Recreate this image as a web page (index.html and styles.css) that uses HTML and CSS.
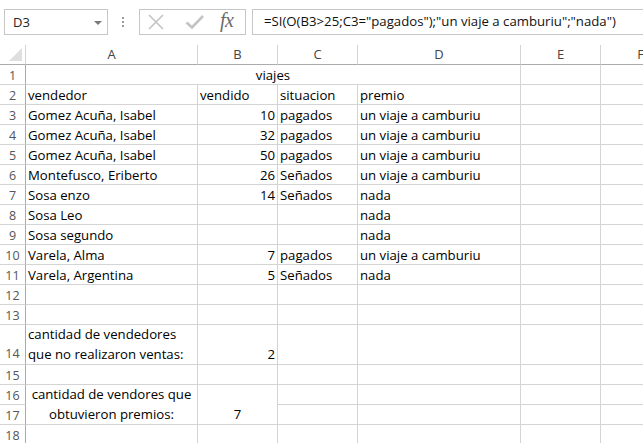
FILE: index.html
```html
<!DOCTYPE html>
<html>
<head>
<meta charset="utf-8">
<link rel="stylesheet" href="styles.css">
</head>
<body>
<div class="fbar">
  <div class="namebox"><span class="nb-text">D3</span><span class="nb-arrow"></span></div>
  <div class="dots"><i></i><i></i><i></i></div>
  <div class="btns">
    <svg class="ico-x" width="16" height="16" viewBox="0 0 16 16"><path d="M1 1L15 15M15 1L1 15" stroke="#c3c3c3" stroke-width="1.6" fill="none"/></svg>
    <svg class="ico-ok" width="20" height="16" viewBox="0 0 20 16"><path d="M1.5 8.5L7 13.5L18 2" stroke="#c3c3c3" stroke-width="2.6" fill="none"/></svg>
    <span class="fx">fx</span>
  </div>
  <div class="formula">=SI(O(B3&gt;25;C3="pagados");"un viaje a camburiu";"nada")</div>
</div>
<div class="sheet">
  <div class="hd corner"><span class="tri"></span></div>
  <div class="hd col">A</div><div class="hd col">B</div><div class="hd col">C</div><div class="hd col">D</div><div class="hd col">E</div><div class="hd col">F</div>

  <div class="rh">1</div><div class="c center span4">viajes</div><div class="c"></div><div class="c"></div>
  <div class="rh">2</div><div class="c">vendedor</div><div class="c">vendido</div><div class="c">situacion</div><div class="c">premio</div><div class="c"></div><div class="c"></div>
  <div class="rh">3</div><div class="c">Gomez Acuña, Isabel</div><div class="c num">10</div><div class="c">pagados</div><div class="c">un viaje a camburiu</div><div class="c"></div><div class="c"></div>
  <div class="rh">4</div><div class="c">Gomez Acuña, Isabel</div><div class="c num">32</div><div class="c">pagados</div><div class="c">un viaje a camburiu</div><div class="c"></div><div class="c"></div>
  <div class="rh">5</div><div class="c">Gomez Acuña, Isabel</div><div class="c num">50</div><div class="c">pagados</div><div class="c">un viaje a camburiu</div><div class="c"></div><div class="c"></div>
  <div class="rh">6</div><div class="c">Montefusco, Eriberto</div><div class="c num">26</div><div class="c">Señados</div><div class="c">un viaje a camburiu</div><div class="c"></div><div class="c"></div>
  <div class="rh">7</div><div class="c">Sosa enzo</div><div class="c num">14</div><div class="c">Señados</div><div class="c">nada</div><div class="c"></div><div class="c"></div>
  <div class="rh">8</div><div class="c">Sosa Leo</div><div class="c num"></div><div class="c"></div><div class="c">nada</div><div class="c"></div><div class="c"></div>
  <div class="rh">9</div><div class="c">Sosa segundo</div><div class="c num"></div><div class="c"></div><div class="c">nada</div><div class="c"></div><div class="c"></div>
  <div class="rh">10</div><div class="c">Varela, Alma</div><div class="c num">7</div><div class="c">pagados</div><div class="c">un viaje a camburiu</div><div class="c"></div><div class="c"></div>
  <div class="rh">11</div><div class="c">Varela, Argentina</div><div class="c num">5</div><div class="c">Señados</div><div class="c">nada</div><div class="c"></div><div class="c"></div>
  <div class="rh">12</div><div class="c"></div><div class="c"></div><div class="c"></div><div class="c"></div><div class="c"></div><div class="c"></div>
  <div class="rh">13</div><div class="c"></div><div class="c"></div><div class="c"></div><div class="c"></div><div class="c"></div><div class="c"></div>
  <div class="rh tall">14</div><div class="c wrap"><span>cantidad de vendedores<br>que no realizaron ventas:</span></div><div class="c num tallc">2</div><div class="c"></div><div class="c"></div><div class="c"></div><div class="c"></div>
  <div class="rh">15</div><div class="c"></div><div class="c"></div><div class="c"></div><div class="c"></div><div class="c"></div><div class="c"></div>
  <div class="rh">16</div><div class="c wrap center span2r"><span>cantidad de vendores que<br>obtuvieron premios:</span></div><div class="c center span2r bottom">7</div><div class="c"></div><div class="c"></div><div class="c"></div><div class="c"></div>
  <div class="rh">17</div><div class="c"></div><div class="c"></div><div class="c"></div><div class="c"></div>
  <div class="rh">18</div><div class="c"></div><div class="c"></div><div class="c"></div><div class="c"></div><div class="c"></div><div class="c"></div>
</div>
</body>
</html>
```
FILE: styles.css
```css
* { box-sizing: border-box; }
html, body { margin: 0; padding: 0; background: #fff; overflow: hidden; }
body {
  width: 643px; height: 443px;
  font-family: "Open Sans", "Noto Sans", sans-serif;
  font-size: 13.2px;
  color: #000;
}
.fbar {
  height: 45px;
  padding-top: 9px;
  display: flex;
  align-items: flex-start;
}
.namebox {
  margin-left: 4px;
  width: 104px; height: 26px;
  border: 1px solid #c6c6c6;
  display: flex; align-items: center;
  padding-left: 8px;
  position: relative;
}
.nb-text { font-size: 13px; color: #222; }
.nb-arrow {
  position: absolute; left: 89px; top: 11px;
  width: 0; height: 0;
  border-left: 4px solid transparent; border-right: 4px solid transparent;
  border-top: 4px solid #7a7a7a;
}
.dots {
  margin-left: 13px; width: 4px; height: 26px;
  display: flex; flex-direction: column; align-items: center; justify-content: center; gap: 2px;
}
.dots i { display: block; width: 2px; height: 2px; background: #9a9a9a; }
.btns {
  margin-left: 14px;
  width: 107px; height: 26px;
  border: 1px solid #c6c6c6;
  display: flex; align-items: center;
  padding-left: 8px;
}
.ico-ok { margin-left: 21px; }
.fx {
  margin-left: 15px;
  font-family: "Liberation Serif", "DejaVu Serif", serif;
  font-style: italic;
  font-size: 20px;
  color: #6a6a6a;
  letter-spacing: -0.5px;
  margin-top: -3px;
}
.formula {
  margin-left: 6px;
  flex: 1;
  height: 26px;
  border: 1px solid #c6c6c6;
  border-right: none;
  padding-left: 11px;
  line-height: 23px;
  white-space: nowrap;
  font-size: 13.2px;
  color: #111;
}
.sheet {
  display: grid;
  grid-template-columns: 26px 172px 80px 80px 163px 80px 80px;
  grid-template-rows: 20px repeat(13, 20px) 40px repeat(4, 20px);
  width: 643px;
  overflow: hidden;
}
.hd {
  border-bottom: 1px solid #ababab;
  border-right: 1px solid #d4d4d4;
  text-align: center;
  line-height: 19px;
  color: #444;
  font-size: 13px;
}
.corner { position: relative; }
.tri {
  position: absolute; right: 3px; bottom: 3px;
  width: 0; height: 0;
  border-left: 13px solid transparent;
  border-bottom: 13px solid #dfdfdf;
}
.rh {
  border-right: 1px solid #ababab;
  border-bottom: 1px solid #d4d4d4;
  text-align: center;
  color: #555;
  font-size: 12.5px;
  line-height: 20px;
  padding-top: 1px;
}
.rh.tall { display: flex; align-items: flex-end; justify-content: center; }
.c {
  border-right: 1px solid #d4d4d4;
  border-bottom: 1px solid #d4d4d4;
  padding: 0 2px;
  line-height: 20px;
  white-space: nowrap;
}
.num { text-align: right; }
.center { text-align: center; }
.span4 { grid-column: span 4; }
.span2r { grid-row: span 2; }
.wrap { display: flex; align-items: flex-end; }
.wrap.center { justify-content: center; }
.tallc { display: flex; align-items: flex-end; justify-content: flex-end; }
.bottom { display: flex; align-items: flex-end; justify-content: center; }
```
